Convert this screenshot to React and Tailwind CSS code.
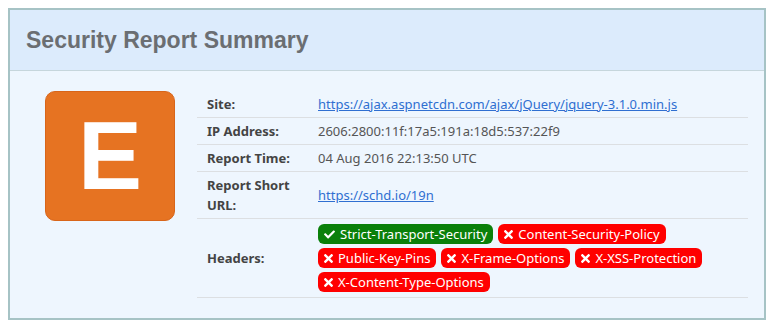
import React from 'react';
import { FaCheck, FaTimes } from 'react-icons/fa';

const rows = [
    { label: 'Site:', value: 'https://ajax.aspnetcdn.com/ajax/jQuery/jquery-3.1.0.min.js', link: true },
    { label: 'IP Address:', value: '2606:2800:11f:17a5:191a:18d5:537:22f9' },
    { label: 'Report Time:', value: '04 Aug 2016 22:13:50 UTC' },
    { label: 'Report Short URL:', value: 'https://schd.io/19n', link: true },
];

const headers = [
    { name: 'Strict-Transport-Security', ok: true },
    { name: 'Content-Security-Policy', ok: false },
    { name: 'Public-Key-Pins', ok: false },
    { name: 'X-Frame-Options', ok: false },
    { name: 'X-XSS-Protection', ok: false },
    { name: 'X-Content-Type-Options', ok: false },
];

const Badge = ({ name, ok }) => (
    <span className={`inline-flex items-center h-[20px] px-[6px] rounded-[6px] text-white text-[13px] leading-none ${ok ? 'bg-[#0a800a]' : 'bg-[#ff0000]'}`}>
        {ok ? <FaCheck className="w-[11px] h-[11px] mr-[5px]" /> : <FaTimes className="w-[9px] h-[13px] mr-[5px]" />}
        {name}
    </span>
);

const App = () => {
    return (
        <div className="p-2 bg-white font-['Noto_Sans',sans-serif]">
            <div className="w-[758px] border-2 border-[#a6c3c5] bg-[#eef6fe]">
                <div className="h-[61px] flex items-center px-4 bg-[#dcebfc] border-b border-[#c6d6dc]">
                    <h1 className="font-['Liberation_Sans',Arial,sans-serif] font-bold text-[23px] text-[#6b6e72]">
                        Security Report Summary
                    </h1>
                </div>
                <div className="flex pt-[20px] pb-[20px]">
                    <div className="pl-[35px]">
                        <div className="w-[130px] h-[130px] rounded-[10px] bg-[#e67322] border border-[#d8651a] flex items-center justify-center">
                            <span className="text-white font-bold text-[96px] leading-none font-['Liberation_Sans',Arial,sans-serif]">E</span>
                        </div>
                    </div>
                    <table className="ml-[22px] w-[551px] text-[13px] leading-[20px] border-collapse">
                        <tbody>
                            {rows.map(row => (
                                <tr key={row.label} className="border-b border-[#dcdfe2]">
                                    <td className="w-[111px] pl-[10px] pr-[10px] py-[3px] font-bold text-[#444] align-middle">
                                        {row.label}
                                    </td>
                                    <td className="pl-[10px] py-[3px] text-[#555] align-middle">
                                        {row.link
                                            ? <a href="#" className="text-[#2f6fd1] underline">{row.value}</a>
                                            : row.value}
                                    </td>
                                </tr>
                            ))}
                            <tr className="border-b border-[#dcdfe2]">
                                <td className="w-[111px] pl-[10px] pr-[10px] font-bold text-[#444] align-middle">Headers:</td>
                                <td className="pl-[10px] py-[5px]">
                                    <div className="flex flex-wrap gap-x-[5px] gap-y-[4px] w-[400px]">
                                        {headers.map(h => <Badge key={h.name} {...h} />)}
                                    </div>
                                </td>
                            </tr>
                        </tbody>
                    </table>
                </div>
            </div>
        </div>
    );
};

export default App;
